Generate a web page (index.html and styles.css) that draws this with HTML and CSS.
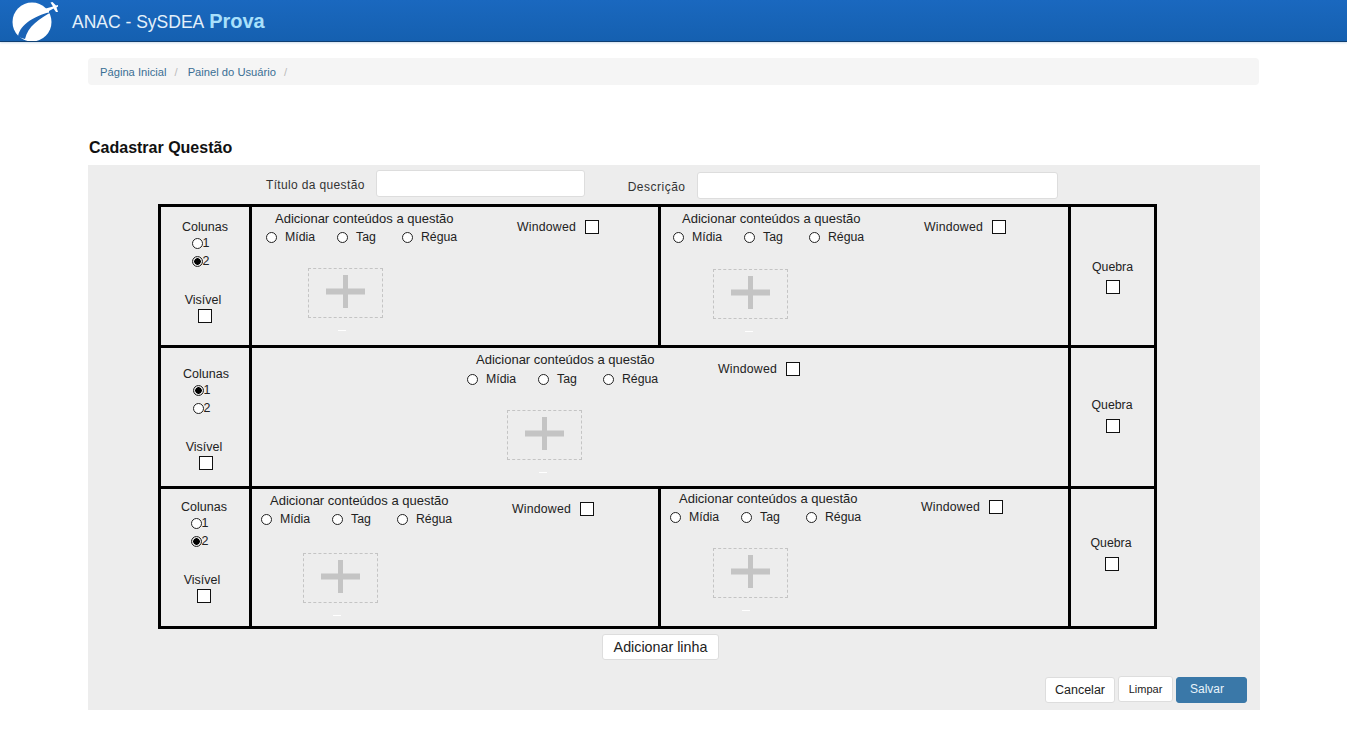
FILE: index.html
```html
<!DOCTYPE html>
<html lang="pt-BR">

<head>
    <meta charset="UTF-8">
    <meta name="viewport" content="width=device-width, initial-scale=1.0">
    <title>ANAC - SySDEA Prova</title>
    <link rel="stylesheet" href="styles.css">
</head>

<body>
    <header class="topbar">
        <svg class="logo" width="62" height="41" viewBox="0 0 62 41">
            <circle cx="32" cy="22" r="19.5" fill="#fff"/>
            <path d="M18 37C19 27 30 17 53 11C39 19 28 26 25 39Z" fill="#1a63b6"/>
            <path d="M44 9L53 6.5L50.5 2.5L52.5 2L56 5.600L58 5L58 6.500L56.500 7.500L58 12L56 12L53.500 8.500L49 11L49 12.500L47.500 12.500L46.500 10.500L44 9Z" fill="#fff"/>
        </svg>
        <span class="brand">ANAC - SySDEA <b>Prova</b></span>
    </header>

    <nav class="breadcrumb">
        <a href="#">Página Inicial</a><span class="sep">/</span>
        <a href="#">Painel do Usuário</a><span class="sep">/</span>
    </nav>

    <h1 class="page-title">Cadastrar Questão</h1>

    <main class="panel">
        <div class="meta-row">
            <label class="meta-label" for="titulo">Título da questão</label>
            <input class="text-input title-input" type="text" id="titulo">
            <label class="meta-label desc-label" for="descricao">Descrição</label>
            <input class="text-input desc-input" type="text" id="descricao">
        </div>

        <div class="grid">
            <!-- linha 1 -->
            <div class="row">
                <div class="side side-a">
                    <span class="col-label">Colunas</span>
                    <label class="col-opt"><input type="radio" name="col1">1</label>
                    <label class="col-opt"><input type="radio" name="col1" checked>2</label>
                    <span class="vis-label">Visível</span>
                    <input type="checkbox">
                </div>
                <div class="cell line-right pos-a">
                    <div class="cell-head">
                        <div class="cell-left">
                            <p class="add-title">Adicionar conteúdos a questão</p>
                            <div class="radios">
                                <label><input type="radio" name="t1">Mídia</label>
                                <label><input type="radio" name="t1">Tag</label>
                                <label><input type="radio" name="t1">Régua</label>
                            </div>
                        </div>
                        <label class="windowed">Windowed<input type="checkbox"></label>
                    </div>
                    <div class="dropzone">
                        <svg width="39" height="33" viewBox="0 0 39 33"><path d="M0 13.500H17V0H22V13.500H39V19.500H22V33H17V19.500H0Z" fill="#c4c4c4"/></svg>
                    </div>
                    <div class="dash"></div>
                </div>
                <div class="cell line-right pos-b">
                    <div class="cell-head">
                        <div class="cell-left">
                            <p class="add-title">Adicionar conteúdos a questão</p>
                            <div class="radios">
                                <label><input type="radio" name="t2">Mídia</label>
                                <label><input type="radio" name="t2">Tag</label>
                                <label><input type="radio" name="t2">Régua</label>
                            </div>
                        </div>
                        <label class="windowed">Windowed<input type="checkbox"></label>
                    </div>
                    <div class="dropzone">
                        <svg width="39" height="33" viewBox="0 0 39 33"><path d="M0 13.500H17V0H22V13.500H39V19.500H22V33H17V19.500H0Z" fill="#c4c4c4"/></svg>
                    </div>
                    <div class="dash"></div>
                </div>
                <div class="side-right break-a">
                    <span>Quebra</span>
                    <input type="checkbox">
                </div>
            </div>

            <!-- linha 2 -->
            <div class="row row-single">
                <div class="side side-b">
                    <span class="col-label">Colunas</span>
                    <label class="col-opt"><input type="radio" name="col2" checked>1</label>
                    <label class="col-opt"><input type="radio" name="col2">2</label>
                    <span class="vis-label">Visível</span>
                    <input type="checkbox">
                </div>
                <div class="cell line-right pos-c">
                    <div class="cell-head">
                        <div class="cell-left">
                            <p class="add-title">Adicionar conteúdos a questão</p>
                            <div class="radios">
                                <label><input type="radio" name="t3">Mídia</label>
                                <label><input type="radio" name="t3">Tag</label>
                                <label><input type="radio" name="t3">Régua</label>
                            </div>
                        </div>
                        <label class="windowed">Windowed<input type="checkbox"></label>
                    </div>
                    <div class="dropzone">
                        <svg width="39" height="33" viewBox="0 0 39 33"><path d="M0 13.500H17V0H22V13.500H39V19.500H22V33H17V19.500H0Z" fill="#c4c4c4"/></svg>
                    </div>
                    <div class="dash"></div>
                </div>
                <div class="side-right break-b">
                    <span>Quebra</span>
                    <input type="checkbox">
                </div>
            </div>

            <!-- linha 3 -->
            <div class="row row-last">
                <div class="side side-c">
                    <span class="col-label">Colunas</span>
                    <label class="col-opt"><input type="radio" name="col3">1</label>
                    <label class="col-opt"><input type="radio" name="col3" checked>2</label>
                    <span class="vis-label">Visível</span>
                    <input type="checkbox">
                </div>
                <div class="cell line-right pos-d">
                    <div class="cell-head">
                        <div class="cell-left">
                            <p class="add-title">Adicionar conteúdos a questão</p>
                            <div class="radios">
                                <label><input type="radio" name="t4">Mídia</label>
                                <label><input type="radio" name="t4">Tag</label>
                                <label><input type="radio" name="t4">Régua</label>
                            </div>
                        </div>
                        <label class="windowed">Windowed<input type="checkbox"></label>
                    </div>
                    <div class="dropzone">
                        <svg width="39" height="33" viewBox="0 0 39 33"><path d="M0 13.500H17V0H22V13.500H39V19.500H22V33H17V19.500H0Z" fill="#c4c4c4"/></svg>
                    </div>
                    <div class="dash"></div>
                </div>
                <div class="cell line-right pos-e">
                    <div class="cell-head">
                        <div class="cell-left">
                            <p class="add-title">Adicionar conteúdos a questão</p>
                            <div class="radios">
                                <label><input type="radio" name="t5">Mídia</label>
                                <label><input type="radio" name="t5">Tag</label>
                                <label><input type="radio" name="t5">Régua</label>
                            </div>
                        </div>
                        <label class="windowed">Windowed<input type="checkbox"></label>
                    </div>
                    <div class="dropzone">
                        <svg width="39" height="33" viewBox="0 0 39 33"><path d="M0 13.500H17V0H22V13.500H39V19.500H22V33H17V19.500H0Z" fill="#c4c4c4"/></svg>
                    </div>
                    <div class="dash"></div>
                </div>
                <div class="side-right break-c">
                    <span>Quebra</span>
                    <input type="checkbox">
                </div>
            </div>
        </div>

        <div class="add-row">
            <button type="button" class="btn btn-add">Adicionar linha</button>
        </div>

        <div class="actions">
            <button type="button" class="btn btn-cancel">Cancelar</button>
            <button type="button" class="btn btn-clear">Limpar</button>
            <button type="button" class="btn btn-save">Salvar</button>
        </div>
    </main>
</body>

</html>
```

FILE: styles.css
```css
body {
    font-family: 'Liberation Sans', Arial, sans-serif;
    font-size: 12.3px;
    background-color: #fff;
    color: #222;
    margin: 0;
    padding: 0;
}

/* barra superior */
.topbar {
    height: 41px;
    display: flex;
    align-items: center;
    background: linear-gradient(#1a68bf, #1560b0);
    border-bottom: 1px solid #0f3f72;
    box-shadow: 0 1px 2px rgba(60, 120, 180, 0.25);
}

.logo {
    flex: none;
    margin-right: 10px;
}

.brand {
    color: #e4f0fa;
    font-size: 17.5px;
    margin-top: 1px;
}

.brand b {
    color: #a9e0fb;
    font-size: 20px;
    margin-left: 1px;
}

.breadcrumb {
    margin: 16px 88px 0;
    height: 27px;
    padding-left: 12px;
    display: flex;
    align-items: center;
    background-color: #f5f5f5;
    border-radius: 4px;
    font-size: 11.2px;
}

.breadcrumb a {
    color: #3a6f94;
    text-decoration: none;
}

.sep {
    color: #bbb;
    margin: 0 10px 0 8px;
}

.page-title {
    font-size: 16px;
    font-weight: bold;
    color: #111;
    margin: 0;
    padding: 54px 0 0 89px;
    line-height: 18px;
    height: 26px;
}

.panel {
    margin: 0 87px 0 88px;
    height: 545px;
    box-sizing: border-box;
    background-color: #ededed;
    padding-top: 5px;
}

.meta-row {
    display: flex;
    align-items: flex-start;
    padding-left: 178px;
    height: 34px;
}

.meta-label {
    margin-top: 8px;
    font-size: 12px;
    letter-spacing: 0.35px;
    color: #333;
}

.text-input {
    box-sizing: border-box;
    height: 27px;
    border: 1px solid #ddd;
    border-radius: 3px;
    background-color: #fff;
}

.title-input {
    width: 209px;
    margin-left: 11px;
}

.desc-label {
    margin-left: 43px;
    margin-top: 10px;
    letter-spacing: 0.5px;
}

.desc-input {
    width: 361px;
    margin-left: 11px;
    margin-top: 2px;
}

/* tabela de linhas */
.grid {
    box-sizing: border-box;
    width: 999px;
    margin-left: 70px;
    border: 3px solid #000;
}

.row {
    display: grid;
    grid-template-columns: 91px 409px 410px 83px;
    height: 141px;
    box-sizing: border-box;
    border-bottom: 3px solid #000;
}

.row-single {
    grid-template-columns: 91px 819px 83px;
}

.row-last {
    height: 137px;
    border-bottom: none;
}

.side {
    display: flex;
    flex-direction: column;
    align-items: center;
    border-right: 3px solid #000;
    box-sizing: border-box;
    line-height: 18px;
    font-size: 12.5px;
}

.side-a { padding-top: 11px; }
.side-b { padding: 17px 0 0 2px; }
.side-c { padding: 9px 2px 0 0; }

.col-label {
    margin-bottom: -2px;
}

.col-opt {
    display: flex;
    align-items: center;
    margin-right: 9px;
}

.vis-label {
    margin: 21px 4px 0 0;
}

.side input[type="checkbox"] {
    margin-right: 5px;
}

.side-right {
    display: flex;
    flex-direction: column;
    align-items: center;
    gap: 7px;
}

.break-a { padding-top: 53px; gap: 6px; }
.break-b { padding: 50px 1px 0 0; }
.break-c { padding: 47px 3px 0 0; }

.line-right {
    border-right: 3px solid #000;
}

.cell {
    box-sizing: border-box;
}

.cell-head {
    display: flex;
    align-items: flex-start;
}

.cell-left {
    width: 251px;
    flex: none;
}

.add-title {
    margin: 0 0 0 9px;
    font-size: 13px;
    line-height: 14px;
}

.radios {
    display: flex;
    margin-top: 4px;
    line-height: 15px;
}

.radios label {
    display: flex;
    align-items: center;
    margin-right: 22px;
}

.radios label:nth-child(2) {
    margin-right: 26px;
}

.radios input[type="radio"] {
    margin-right: 8px;
}

.windowed {
    display: flex;
    align-items: center;
    margin-top: 8px;
    white-space: nowrap;
    letter-spacing: 0.2px;
}

.windowed input {
    margin-left: 9px;
}

.dropzone {
    box-sizing: border-box;
    width: 75px;
    height: 50px;
    padding-bottom: 3px;
    border: 1px dashed #c4c4c4;
    display: flex;
    align-items: center;
    justify-content: center;
    margin-top: 23px;
}

.dash {
    width: 8px;
    height: 1px;
    background-color: #fff;
    margin-top: 12px;
}

/* cada bloco tem um deslocamento proprio na tela original */
.pos-a { padding: 5px 0 0 14px; }
.pos-a .dropzone { margin-left: 42px; }
.pos-a .dash { margin-left: 72px; }

.pos-b { padding: 5px 0 0 12px; }
.pos-b .dropzone { margin-left: 40px; margin-top: 24px; }
.pos-b .dash { margin-left: 72px; }

.pos-c { padding: 5px 0 0 215px; }
.pos-c .radios { margin-top: 5px; }
.pos-c .windowed { margin-top: 9px; }
.pos-c .dropzone { margin-left: 40px; margin-top: 23px; }
.pos-c .dash { margin-left: 72px; }

.pos-d { padding: 5px 0 0 9px; }
.pos-d .dropzone { margin-left: 42px; margin-top: 26px; }
.pos-d .dash { margin-left: 72px; }

.pos-e { padding: 3px 0 0 9px; }
.pos-e .dropzone { margin-left: 43px; margin-top: 23px; }
.pos-e .dash { margin-left: 72px; }

/* inputs desenhados a mao: o nativo nao bate com a tela */
input[type="radio"] {
    appearance: none;
    box-sizing: border-box;
    width: 11px;
    height: 11px;
    margin: 0;
    border: 1px solid #222;
    border-radius: 50%;
    background-color: #fff;
    flex: none;
}

input[type="radio"]:checked {
    background: radial-gradient(circle, #000 0 3px, #ddd 3.5px);
}

input[type="checkbox"] {
    appearance: none;
    box-sizing: border-box;
    width: 14px;
    height: 14px;
    margin-top: 0;
    margin-bottom: 0;
    border: 1px solid #111;
    background-color: #fff;
    flex: none;
}

.btn {
    box-sizing: border-box;
    height: 26px;
    border: 1px solid #ddd;
    border-radius: 3px;
    background-color: #fff;
    font-family: inherit;
    font-size: 12px;
    padding: 0;
    color: #222;
}

.add-row {
    width: 999px;
    margin: 5px 0 0 70px;
    display: flex;
    justify-content: center;
    padding-left: 6px;
    box-sizing: border-box;
}

.btn-add {
    width: 117px;
    font-size: 14.3px;
}

.actions {
    display: flex;
    justify-content: flex-end;
    align-items: flex-start;
    gap: 3px;
    margin-top: 17px;
    padding-right: 13px;
}

.btn-cancel {
    width: 70px;
    font-size: 12.5px;
}

.btn-clear {
    width: 55px;
    font-size: 11px;
    margin-top: -1px;
}

.btn-save {
    width: 71px;
    background-color: #3a78a8;
    border-color: #3a78a8;
    color: #e8f4fb;
    text-align: left;
    padding: 0 0 3px 13px;
}
```
